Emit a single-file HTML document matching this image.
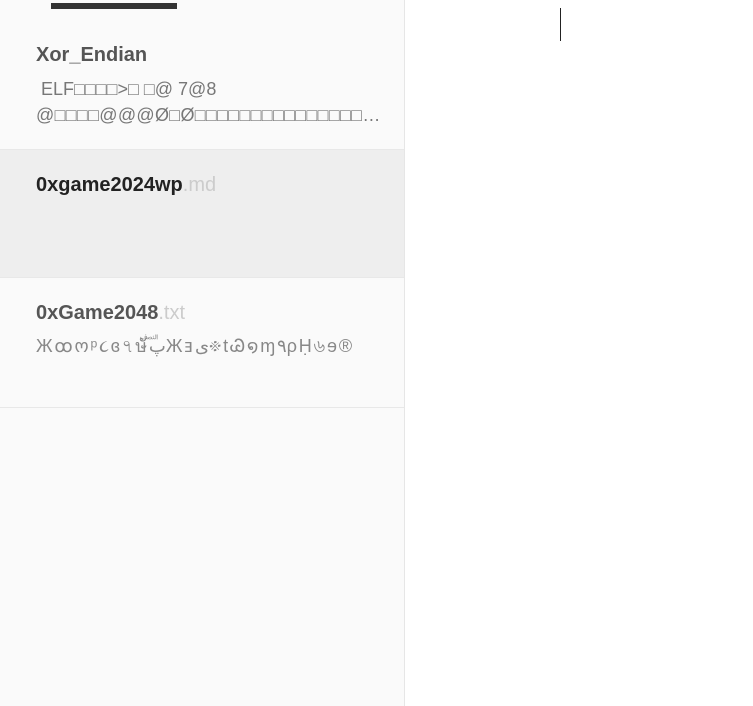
<!DOCTYPE html>
<html><head><meta charset="utf-8"><style>
body{margin:0;width:753px;height:706px;background:#fff;position:relative;overflow:hidden;font-family:"Liberation Sans","DejaVu Sans",sans-serif}
.side{position:absolute;left:0;top:0;width:404px;height:706px;background:#fafafa;border-right:1px solid #e6e6e6}
.bar{position:absolute;left:51px;top:3px;width:126px;height:6px;background:#333}
.item{position:absolute;left:0;width:404px;border-bottom:1px solid #e8e8e8}
.t{position:absolute;left:36px;font-weight:bold;font-size:20px;color:#555;white-space:nowrap}
.ext{font-weight:normal;color:#ccc}
.b{position:absolute;left:36px;font-size:18px;color:#777;line-height:26px;white-space:nowrap}
.cursor{position:absolute;left:560px;top:8px;width:1px;height:33px;background:#222}
</style></head><body>
<div class="side">
<div class="bar"></div>
<div class="item" style="top:0;height:149px">
<div class="t" style="top:44px">Xor_Endian</div>
<div class="b" style="top:76px">&nbsp;ELF□□□□&gt;□ □@ 7@8<br><span style="letter-spacing:0.3px">@□□□□@@@Ø□Ø□□□□□□□□□□□□□□□…</span></div>
</div>
<div class="item" style="top:150px;height:127px;background:#eee">
<div class="t" style="top:24px;color:#222">0xgame2024wp<span class="ext">.md</span></div>
</div>
<div class="item" style="top:278px;height:129px">
<div class="t" style="top:24px">0xGame2048<span class="ext">.txt</span></div>
<div class="b" style="top:55px;color:#888;letter-spacing:1.8px">Жꝏოᵖ૮ɞ৭ษัࣜپЖⱻى፠tᏊ໑ɱ٩ρḤ৬ɘ®</div>
</div>
</div>
<div class="cursor"></div>
</body></html>
